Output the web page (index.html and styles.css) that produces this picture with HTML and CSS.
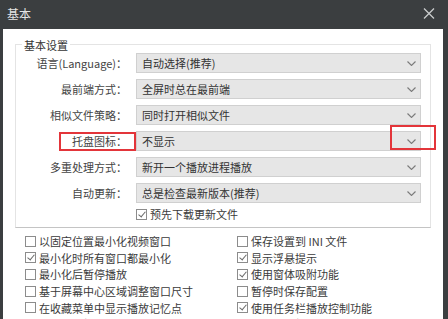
FILE: index.html
```html
<!DOCTYPE html>
<html lang="zh-CN">
<head>
  <meta charset="UTF-8" />
  <title>基本</title>
  <link rel="stylesheet" href="styles.css">
</head>
<body>
  <div class="window">
    <div class="titlebar">
      <span class="title">基本</span>
      <svg class="close" width="12" height="11" viewBox="0 0 12 11">
        <path d="M1 0.5 L11 10.5 M11 0.5 L1 10.5" stroke="#c9cbcc" stroke-width="1.3" fill="none" />
      </svg>
    </div>

    <div class="content">
      <div class="group">
        <span class="legend">基本设置</span>

        <div class="form">
          <label>语言(Language)：</label>
          <div class="select"><span>自动选择(推荐)</span><svg width="9" height="5" viewBox="0 0 9 5"><path d="M0.5 0.5 L4.5 4.5 L8.5 0.5" /></svg></div>

          <label>最前端方式：</label>
          <div class="select"><span>全屏时总在最前端</span><svg width="9" height="5" viewBox="0 0 9 5"><path d="M0.5 0.5 L4.5 4.5 L8.5 0.5" /></svg></div>

          <label>相似文件策略：</label>
          <div class="select"><span>同时打开相似文件</span><svg width="9" height="5" viewBox="0 0 9 5"><path d="M0.5 0.5 L4.5 4.5 L8.5 0.5" /></svg></div>

          <label>托盘图标：</label>
          <div class="select"><span>不显示</span><svg width="9" height="5" viewBox="0 0 9 5"><path d="M0.5 0.5 L4.5 4.5 L8.5 0.5" /></svg></div>

          <label>多重处理方式：</label>
          <div class="select"><span>新开一个播放进程播放</span><svg width="9" height="5" viewBox="0 0 9 5"><path d="M0.5 0.5 L4.5 4.5 L8.5 0.5" /></svg></div>

          <label>自动更新：</label>
          <div class="select"><span>总是检查最新版本(推荐)</span><svg width="9" height="5" viewBox="0 0 9 5"><path d="M0.5 0.5 L4.5 4.5 L8.5 0.5" /></svg></div>
        </div>

        <div class="check prefetch"><span class="box checked"></span>预先下载更新文件</div>
      </div>

      <div class="options">
        <div class="check"><span class="box"></span>以固定位置最小化视频窗口</div>
        <div class="check"><span class="box"></span>保存设置到 INI 文件</div>
        <div class="check"><span class="box checked"></span>最小化时所有窗口都最小化</div>
        <div class="check"><span class="box checked"></span>显示浮悬提示</div>
        <div class="check"><span class="box"></span>最小化后暂停播放</div>
        <div class="check"><span class="box checked"></span>使用窗体吸附功能</div>
        <div class="check"><span class="box"></span>基于屏幕中心区域调整窗口尺寸</div>
        <div class="check"><span class="box"></span>暂停时保存配置</div>
        <div class="check"><span class="box"></span>在收藏菜单中显示播放记忆点</div>
        <div class="check"><span class="box checked"></span>使用任务栏播放控制功能</div>
        <div class="check"><span class="box"></span>从托盘图标还原时显示主窗口</div>
        <div class="check"><span class="box"></span>从托盘图标显示播放列表</div>
      </div>
    </div>

    <div class="mark mark-label"></div>
    <div class="mark mark-arrow"></div>
  </div>
</body>
</html>
```

FILE: styles.css
```css
* {
  margin: 0;
  padding: 0;
  box-sizing: border-box;
}

body {
  width: 448px;
  height: 319px;
  overflow: hidden;
  font-family: "Noto Sans CJK SC", "Noto Sans", sans-serif;
  font-size: 11px;
  color: #3a3a3a;
}

.window {
  position: relative;
  width: 448px;
  height: 319px;
  display: flex;
  flex-direction: column;
  background: #3b3e40;
  padding: 0 5px 0 3px;
}

.titlebar {
  height: 29px;
  flex-shrink: 0;
  display: flex;
  align-items: center;
  justify-content: space-between;
  padding: 0 8px 3px 4px;
}

.title {
  color: #e4e4e4;
  font-size: 12px;
}

.content {
  flex: 1;
  background: #ffffff;
  overflow: hidden;
  padding: 15px 12px 0 12px;
}

.group {
  border: 1px solid #e4e4e4;
  border-bottom-color: #c4c4c4;
  padding-bottom: 5px;
}

.legend {
  display: block;
  width: fit-content;
  margin: -7px 0 0 6px;
  padding: 0 2px;
  line-height: 14px;
  background: #ffffff;
  color: #333;
}

.form {
  display: grid;
  grid-template-columns: 111px 285px;
  grid-auto-rows: 20px;
  column-gap: 9px;
  row-gap: 6px;
  margin-top: 1px;
}

.form label {
  text-align: right;
  line-height: 20px;
  color: #444;
  white-space: nowrap;
}

.select {
  display: flex;
  align-items: center;
  justify-content: space-between;
  background: #e6e6e6;
  border: 1px solid #d0d0d0;
  padding: 0 4px 0 5px;
  color: #333;
}

.select svg path {
  stroke: #7a7a7a;
  stroke-width: 1.1;
  fill: none;
}

.check {
  display: flex;
  align-items: center;
  gap: 3px;
  height: 16.6px;
  white-space: nowrap;
  color: #3a3a3a;
}

.prefetch {
  margin: 3px 0 0 120px;
  height: 16px;
}

.box {
  width: 11px;
  height: 11px;
  flex-shrink: 0;
  border: 1px solid #8c8c8c;
  background: #fff;
  position: relative;
}

.box.checked::after {
  content: "";
  position: absolute;
  left: 3px;
  top: 0px;
  width: 3px;
  height: 6px;
  border: solid #6a6a6a;
  border-width: 0 1.3px 1.3px 0;
  transform: rotate(40deg);
}

.options {
  display: grid;
  grid-template-columns: 212px 1fr;
  padding: 5px 0 0 10px;
}

.mark {
  position: absolute;
  border: 2px solid #e3353a;
}

.mark-label {
  left: 59px;
  top: 132px;
  width: 77px;
  height: 19px;
}

.mark-arrow {
  left: 390px;
  top: 125px;
  width: 46px;
  height: 25px;
}
```
